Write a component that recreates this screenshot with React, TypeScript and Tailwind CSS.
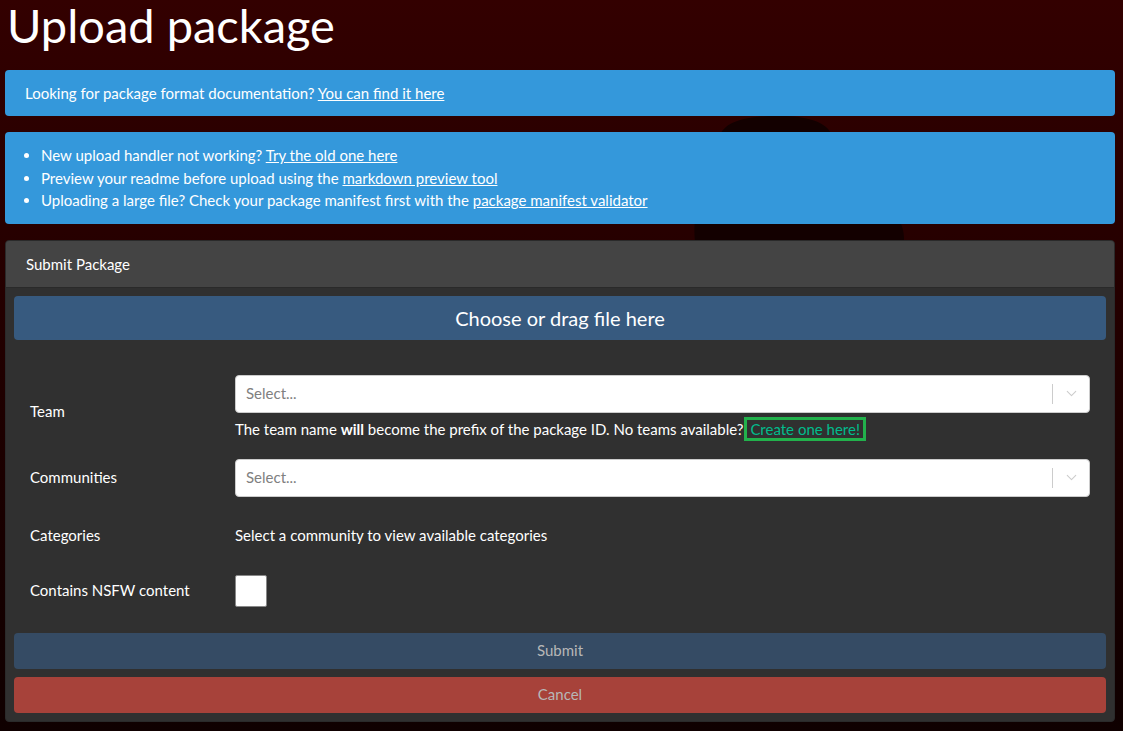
import { ChevronDown } from "lucide-react";

function FakeSelect() {
  return (
    <div className="flex h-[38px] items-center rounded-[4px] border border-[#cccccc] bg-white">
      <span className="flex-1 pl-[10px] text-[15px] text-[#808080]">Select...</span>
      <span className="h-[20px] w-px bg-[#cccccc]" />
      <span className="flex w-[36px] items-center justify-center text-[#cccccc]">
        <ChevronDown size={17} strokeWidth={1.5} />
      </span>
    </div>
  );
}

export default function App() {
  return (
    <div
      className="relative min-h-[731px] overflow-hidden bg-gradient-to-b from-[#330000] to-[#0f0000] text-[15px] text-white"
      style={{ fontFamily: "Lato, 'Noto Sans', sans-serif" }}
    >
      {/* faint silhouette behind the alerts */}
      <svg
        className="pointer-events-none absolute left-[690px] top-[112px]"
        width="220"
        height="135"
        viewBox="0 0 220 135"
      >
        <path
          d="M28 30 C 30 8, 60 4, 85 4 C 110 3, 138 8, 142 24 L 150 80 C 190 88, 215 100, 214 128 L 5 130 C 2 100, 10 70, 28 30 Z"
          fill="#130000"
        />
      </svg>

      <div className="relative ml-[5px] w-[1110px]">
        <h1 className="mb-[20px] pl-[2px] pt-[1px] text-[47px] leading-[49px] font-normal">Upload package</h1>

        <div className="mb-4 rounded-[4px] bg-[#3498db] px-5 py-3 leading-[22px]">
          Looking for package format documentation?{" "}
          <a className="underline">You can find it here</a>
        </div>

        <div className="mb-4 rounded-[4px] bg-[#3498db] px-5 py-3 leading-[22.5px]">
          <ul className="list-disc pl-[16px]">
            <li>
              New upload handler not working? <a className="underline">Try the old one here</a>
            </li>
            <li>
              Preview your readme before upload using the{" "}
              <a className="underline">markdown preview tool</a>
            </li>
            <li>
              Uploading a large file? Check your package manifest first with the{" "}
              <a className="underline">package manifest validator</a>
            </li>
          </ul>
        </div>

        <div className="overflow-hidden rounded-[4px] border border-[#2a2a2a] bg-[#303030]">
          <div className="border-b border-[#2a2a2a] bg-[#444444] px-5 py-3 leading-[22px]">
            Submit Package
          </div>
          <div className="p-2">
            <div className="flex h-[44px] items-center justify-center rounded-[4px] bg-[#375a7f] text-[20px]">
              Choose or drag file here
            </div>

            <div className="mt-[25px] px-4">
              <div className="grid grid-cols-[205px_1fr] items-center pb-[12px] pt-[10px]">
                <div className="pt-[8px]">Team</div>
                <div>
                  <FakeSelect />
                  <div className="mt-[5px] leading-[22px]">
                    The team name <b>will</b> become the prefix of the package ID. No teams available?{" "}
                    <a className="px-[3px] text-[#00bc8c] outline-[3px] outline-[#22b14c] outline-solid">
                      Create one here!
                    </a>
                  </div>
                </div>
              </div>

              <div className="grid grid-cols-[205px_1fr] items-center pb-[10px] pt-[7px]">
                <div>Communities</div>
                <FakeSelect />
              </div>

              <div className="grid grid-cols-[205px_1fr] items-center pb-[12px] pt-[17px] leading-[22px]">
                <div>Categories</div>
                <div>Select a community to view available categories</div>
              </div>

              <div className="grid grid-cols-[205px_1fr] items-center pb-[26px] pt-[17px]">
                <div>Contains NSFW content</div>
                <div className="h-[32px] w-[32px] rounded-[2px] border border-[#888888] bg-white" />
              </div>
            </div>

            <div className="flex h-[36px] items-center justify-center rounded-[4px] bg-[#354b64] text-[#b7b7b7]">
              Submit
            </div>
            <div className="mt-[8px] flex h-[36px] items-center justify-center rounded-[4px] bg-[#a7423a] text-[#b7b7b7]">
              Cancel
            </div>
          </div>
        </div>
      </div>
    </div>
  );
}
